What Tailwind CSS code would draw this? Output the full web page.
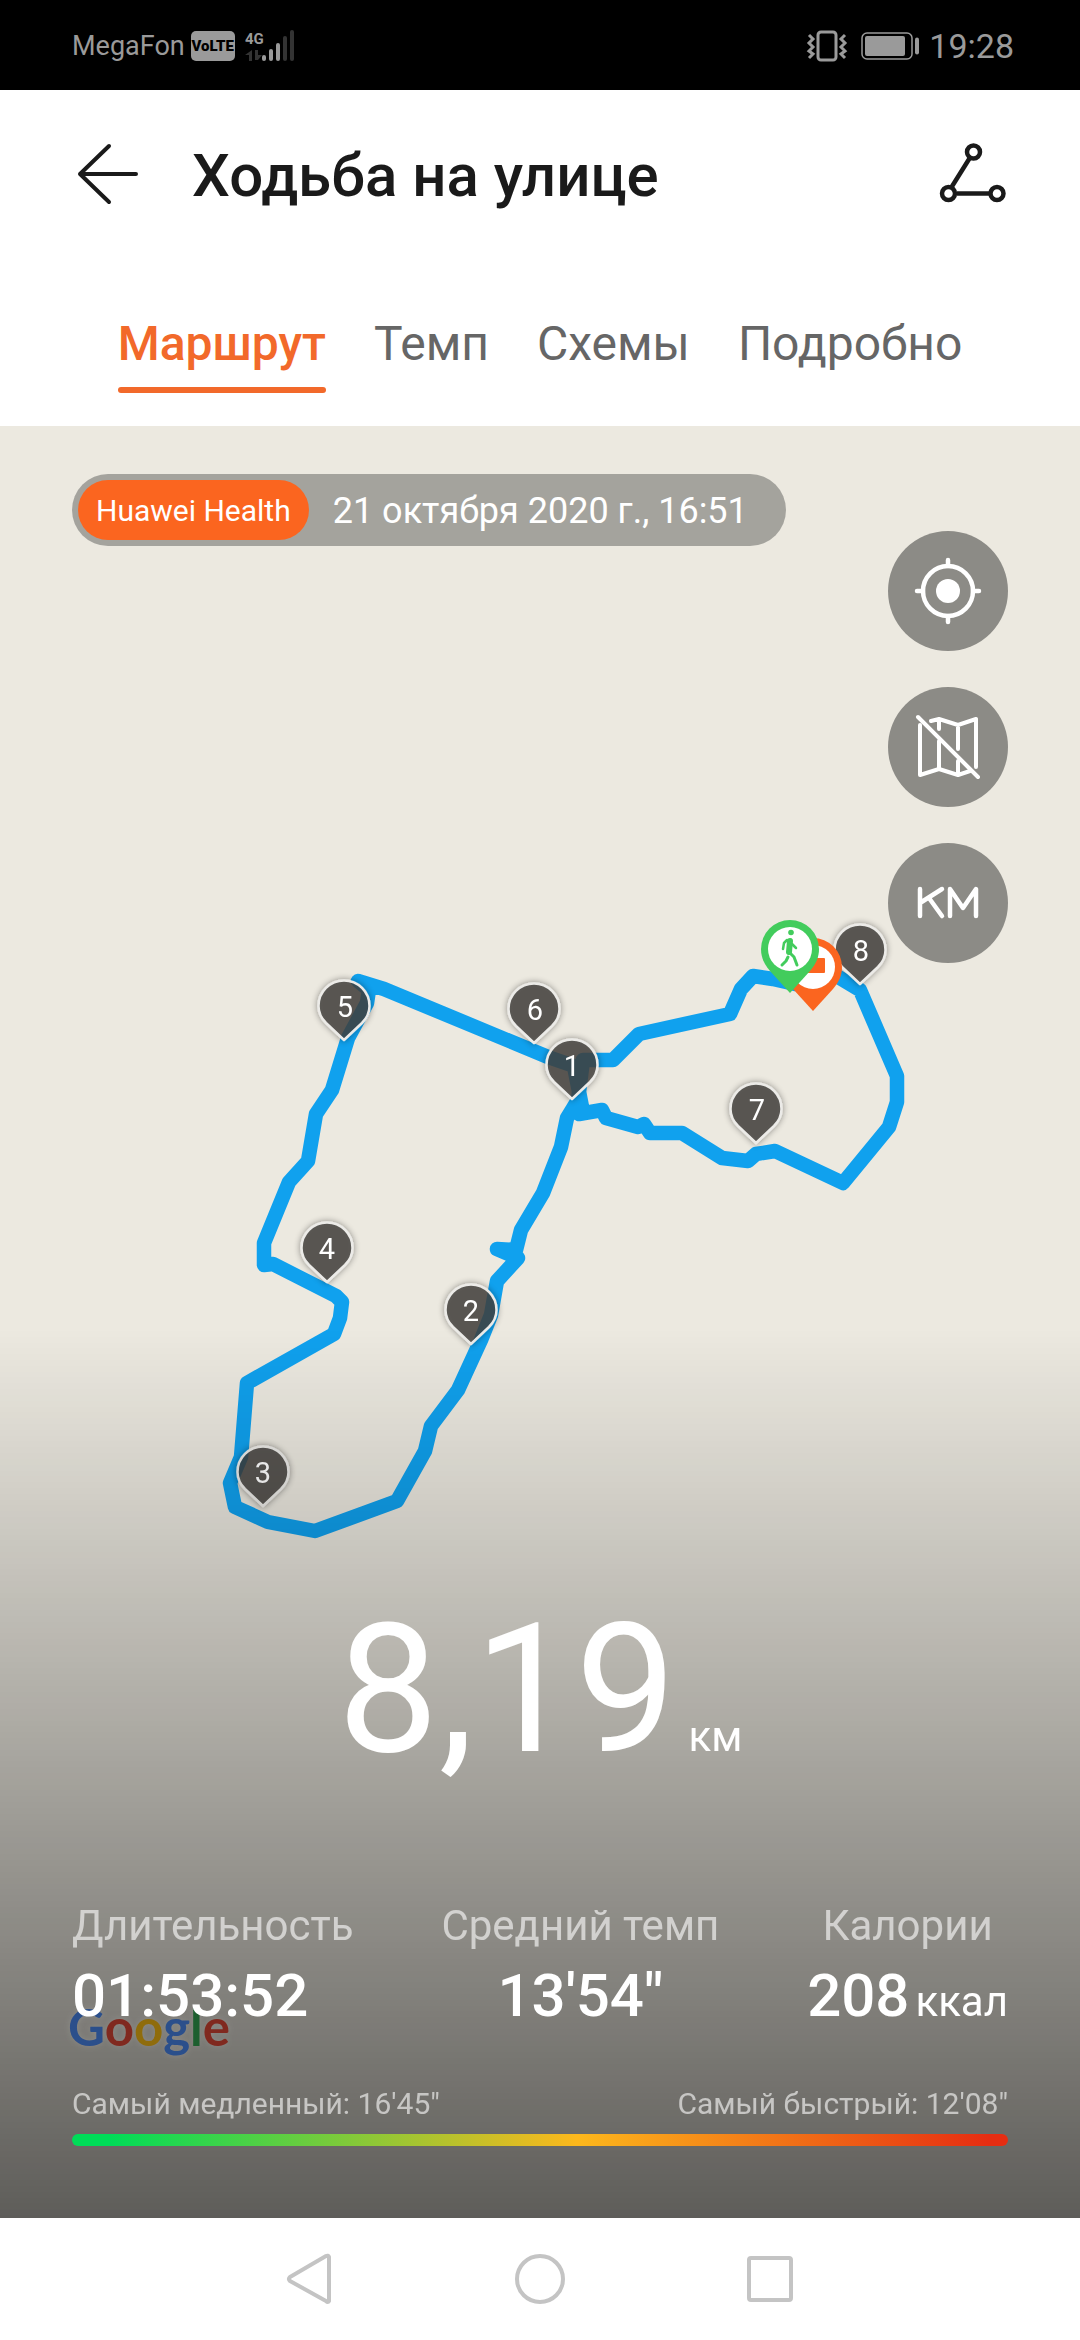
<!DOCTYPE html>
<html lang="ru">
<head>
<meta charset="utf-8">
<meta name="viewport" content="width=device-width, initial-scale=1">
<title>Ходьба на улице</title>
<script src="https://cdn.jsdelivr.net/npm/@tailwindcss/browser@4"></script>
</head>
<body class="min-h-screen flex flex-col bg-white font-[Roboto,sans-serif]">

<!-- Status bar -->
<div class="h-[90px] shrink-0 bg-black text-[#9a9a9a] flex items-center justify-between px-[66px] pt-[2px]">
  <div class="flex items-center pl-[6px]">
    <span class="text-[27px] leading-8">MegaFon</span>
    <span class="ml-[6px] w-11 h-[30px] rounded-[5px] bg-[#9a9a9a] text-black text-[15px] leading-[30px] font-black text-center">VoLTE</span>
    <svg class="ml-[10px]" width="54" height="34" viewBox="0 0 54 34">
      <text x="0" y="15" font-size="15" font-weight="700" fill="#9a9a9a">4G</text>
      <g fill="#333"><path d="M7 21v11H4v-6H0zM10 21h3v5h4l-4 5h-3z"/><rect x="38" y="7" width="4" height="25" rx="2"/><rect x="45" y="1" width="4" height="31" rx="2"/></g>
      <g fill="#9a9a9a"><rect x="17" y="26" width="4" height="6" rx="2"/><rect x="24" y="20" width="4" height="12" rx="2"/><rect x="31" y="14" width="4" height="18" rx="2"/></g>
    </svg>
  </div>
  <div class="flex items-center">
    <svg width="42" height="34" viewBox="0 0 42 34" fill="none" stroke="#9a9a9a">
      <rect x="12" y="3" width="18" height="28" rx="3" stroke-width="3"/>
      <path d="M3 6l4 4-4 4 4 4-4 4 4 3-4 4M39 6l-4 4 4 4-4 4 4 4-4 3 4 4" stroke-width="3"/>
    </svg>
    <svg class="ml-[13px]" width="60" height="34" viewBox="0 0 60 34" fill="none">
      <rect x="1" y="4" width="50" height="26" rx="5" stroke="#9a9a9a" stroke-width="1.5"/>
      <rect x="4" y="7" width="40" height="20" rx="2" fill="#9a9a9a"/>
      <rect x="54" y="8.500" width="4" height="17" rx="2" fill="#9a9a9a"/>
    </svg>
    <span class="ml-2 text-[34px] leading-10">19:28</span>
  </div>
</div>

<!-- Title bar -->
<header class="h-[168px] shrink-0 flex items-center px-[72px]">
  <button class="size-[72px] shrink-0" aria-label="Назад">
    <svg width="72" height="72" viewBox="0 0 72 72" fill="none" stroke="#1a1a1a" stroke-width="4" stroke-linecap="round" stroke-linejoin="round"><path d="M64 36H8M37 8L8 36l29 28"/></svg>
  </button>
  <h1 class="ml-12 pt-1 text-[60px] leading-[72px] font-medium text-[#1a1a1a]">Ходьба на улице</h1>
  <button class="ml-auto size-[72px] shrink-0" aria-label="Маршрут и публикация">
    <svg width="72" height="72" viewBox="0 0 72 72" fill="none" stroke="#1a1a1a"><path d="M15 50L35 18M21 55.500h33" stroke-width="4.500"/><g stroke-width="4.500"><circle cx="37.500" cy="14" r="6.500"/><circle cx="12.500" cy="55.500" r="6.500"/><circle cx="61" cy="55.500" r="6.500"/></g></svg>
  </button>
</header>

<!-- Tabs -->
<nav class="h-[168px] shrink-0 flex justify-center items-start gap-12 pt-14 text-[48px] leading-[60px] text-[#666]">
  <a href="#route" class="h-[79px] flex flex-col justify-between text-[#f2692a] font-medium">Маршрут<span class="h-[6px] rounded-full bg-[#f2692a]"></span></a>
  <a href="#pace">Темп</a>
  <a href="#charts">Схемы</a>
  <a href="#details">Подробно</a>
</nav>

<!-- Map with summary -->
<main class="relative grow flex flex-col justify-between bg-[#ece9e0] px-[72px] pt-12 pb-[72px]">
  <svg class="absolute inset-0 w-full h-full" viewBox="0 426 1080 1792" preserveAspectRatio="xMidYMid slice">
    <defs>
      <path id="pin" d="M0 0L-18 -17C-23 -22 -25.500 -28 -25.500 -34A25.500 25.500 0 0 1 25.500 -34C25.500 -28 23 -22 18 -17Z"/>
      <path id="bigpin" d="M0 0L-20 -22C-26 -29 -29 -36 -29 -44A29 29 0 0 1 29 -44C29 -36 26 -29 20 -22Z"/>
      <filter id="sh" x="-30%" y="-30%" width="160%" height="160%"><feDropShadow dx="0" dy="0" stdDeviation="3" flood-color="#000" flood-opacity=".45"/></filter>
    </defs>
    <path fill="none" stroke="#10a1ee" stroke-width="14.500" stroke-linejoin="round" stroke-linecap="round" d="M795 984L773 979L753 976L741 989L730 1014L639 1034L613 1060L583 1060L578 1100L567 1118L561 1147L543 1193L521 1230L516 1250L497 1249L518 1258L497 1281L491 1315L481 1340L458 1390L431 1426L425 1451L397 1501L315 1531L268 1522L235 1507L230 1483L241 1457L247 1383L334 1334L340 1318L342 1302L336 1296L273 1264L264 1265V1243L289 1182L308 1161L316 1114L332 1090L348 1038L367 1003L369 990L358 981L384 989L548 1057L574 1066L582 1107L579 1114L602 1110L606 1118L638 1127L644 1124L650 1133H682L722 1158L748 1161L756 1154L775 1151L843 1183L889 1127L897 1102V1076L860 990L820 966"/>
    <g filter="url(#sh)">
      <g fill="#43403c" fill-opacity=".78" stroke="#ecebe8" stroke-width="2.500" stroke-linejoin="round">
        <use href="#pin" x="344" y="1040"/><use href="#pin" x="534" y="1043"/><use href="#pin" x="572" y="1099"/><use href="#pin" x="327" y="1282"/><use href="#pin" x="471" y="1344"/><use href="#pin" x="263" y="1506"/><use href="#pin" x="756" y="1143"/><use href="#pin" x="860" y="984"/>
      </g>
    </g>
    <g fill="#fff" font-size="29" text-anchor="middle" font-family="Roboto, sans-serif">
      <text x="345" y="1017">5</text><text x="535" y="1020">6</text><text x="572" y="1076">1</text><text x="327" y="1259">4</text><text x="471" y="1321">2</text><text x="263" y="1483">3</text><text x="757" y="1120">7</text><text x="861" y="961">8</text>
    </g>
    <use href="#bigpin" x="813" y="1011" fill="#fb651f"/>
    <circle cx="813" cy="967" r="22" fill="#fff"/>
    <rect x="801" y="958" width="24" height="15" rx="1" fill="#fb651f"/>
    <use href="#bigpin" x="790" y="993" fill="#42cc5c"/>
    <circle cx="790" cy="949" r="22" fill="#fff"/>
    <g fill="none" stroke="#42cc5c" stroke-linecap="round" stroke-linejoin="round">
      <circle cx="791" cy="932.500" r="2.800" fill="#42cc5c" stroke="none"/>
      <path d="M790 941L789 952" stroke-width="6"/>
      <path d="M789 952L794 957L797 965" stroke-width="3"/>
      <path d="M788 957L786 961L782 965" stroke-width="3"/>
      <path d="M787 940L784 943L783 949M792 944L796 948" stroke-width="2.500"/>
    </g>
  </svg>
  <div class="absolute inset-x-0 bottom-0 h-[890px] bg-linear-to-b from-black/0 to-black/60"></div>
  <div class="absolute left-[68px] bottom-[164px] text-[51px] leading-[54px] font-[Lato,sans-serif] font-bold [text-shadow:0_0_6px_rgb(255_255_255/0.12)]"><span class="text-[#2b4f8b]">G</span><span class="text-[#80291f]">o</span><span class="text-[#8f6c0c]">o</span><span class="text-[#2b4f8b]">g</span><span class="text-[#1d5f2f]">l</span><span class="text-[#80291f]">e</span></div>

  <div class="relative flex justify-between items-start">
    <div class="h-[72px] rounded-full bg-[#a4a39d] flex items-center pl-[6px] pr-[38px] text-white">
      <span class="h-[60px] rounded-full bg-[#fb651f] px-[18px] text-[30px] leading-[62px]">Huawei Health</span>
      <span class="ml-6 text-[36px] leading-[72px] pt-[2px]">21 октября 2020 г., 16:51</span>
    </div>
    <div class="mt-[57px] flex flex-col gap-9">
      <button class="size-[120px] rounded-full bg-[#8c8b86]" aria-label="Моё местоположение">
        <svg width="120" height="120" viewBox="0 0 120 120" fill="none" stroke="#fff" stroke-width="4.500" stroke-linecap="round"><circle cx="60" cy="60" r="25"/><circle cx="60" cy="60" r="12" fill="#fff" stroke="none"/><path d="M60 29v6M60 85v6M29 60h6M85 60h6"/></svg>
      </button>
      <button class="size-[120px] rounded-full bg-[#8c8b86]" aria-label="Скрыть карту">
        <svg width="120" height="120" viewBox="0 0 120 120" fill="none" stroke="#fff" stroke-width="4" stroke-linecap="round" stroke-linejoin="round"><path d="M32 38V88L51 82L70 88L82 84M51 54V82M70 74V88M43 34L51 32L70 38L88 32V80M51 32V42M70 38V62"/><path d="M30 30L90 90"/></svg>
      </button>
      <button class="size-[120px] rounded-full bg-[#8c8b86]" aria-label="Километровые отметки">
        <svg width="120" height="120" viewBox="0 0 120 120" fill="none" stroke="#fff" stroke-width="4.500" stroke-linecap="round" stroke-linejoin="round"><path d="M32 46V73M54 46L32 60M41 55L54 73M62 73V46L75 65L88 46V73"/></svg>
      </button>
    </div>
  </div>

  <section class="relative text-white">
    <p class="flex justify-center items-baseline gap-3"><span class="text-[180px] leading-[180px]">8,19</span><span class="text-[42px]">км</span></p>
    <dl class="mt-[122px] flex justify-between text-center">
      <div class="flex flex-col gap-[10px] text-left">
        <dt class="text-[42px] leading-[48px] text-white/60">Длительность</dt>
        <dd class="text-[60px] leading-[72px] font-medium">01:53:52</dd>
      </div>
      <div class="flex flex-col gap-[10px]">
        <dt class="text-[42px] leading-[48px] text-white/60">Средний темп</dt>
        <dd class="text-[60px] leading-[72px] font-medium">13'54"</dd>
      </div>
      <div class="flex flex-col gap-[10px]">
        <dt class="text-[42px] leading-[48px] text-white/60">Калории</dt>
        <dd class="flex items-baseline gap-[6px] text-[60px] leading-[72px] font-medium">208<span class="text-[42px] font-normal">ккал</span></dd>
      </div>
    </dl>
    <div class="mt-12 flex justify-between text-[30px] leading-9 text-white/60"><span>Самый медленный: 16'45"</span><span>Самый быстрый: 12'08"</span></div>
    <div class="mt-3 h-3 rounded-full bg-[linear-gradient(to_right,#00dc58_4%,#fdb81c_54%,#e62d12_98%)]"></div>
  </section>
</main>

<!-- System navigation -->
<nav class="h-[122px] shrink-0 flex justify-center items-center gap-[158px]">
  <button aria-label="Назад" class="size-[72px]"><svg width="72" height="72" viewBox="0 0 72 72" fill="none" stroke="#c4c4c4" stroke-width="4" stroke-linejoin="round"><path d="M55 14V58Q54 60 52 58L16 38Q14 36 16 34L52 13Q54 12 55 14Z"/></svg></button>
  <button aria-label="Главный экран" class="size-[72px]"><svg width="72" height="72" viewBox="0 0 72 72" fill="none" stroke="#c4c4c4" stroke-width="4"><circle cx="36" cy="36" r="23"/></svg></button>
  <button aria-label="Недавние" class="size-[72px]"><svg width="72" height="72" viewBox="0 0 72 72" fill="none" stroke="#c4c4c4" stroke-width="4"><rect x="15" y="15" width="42" height="42" rx="2"/></svg></button>
</nav>
</body>
</html>
